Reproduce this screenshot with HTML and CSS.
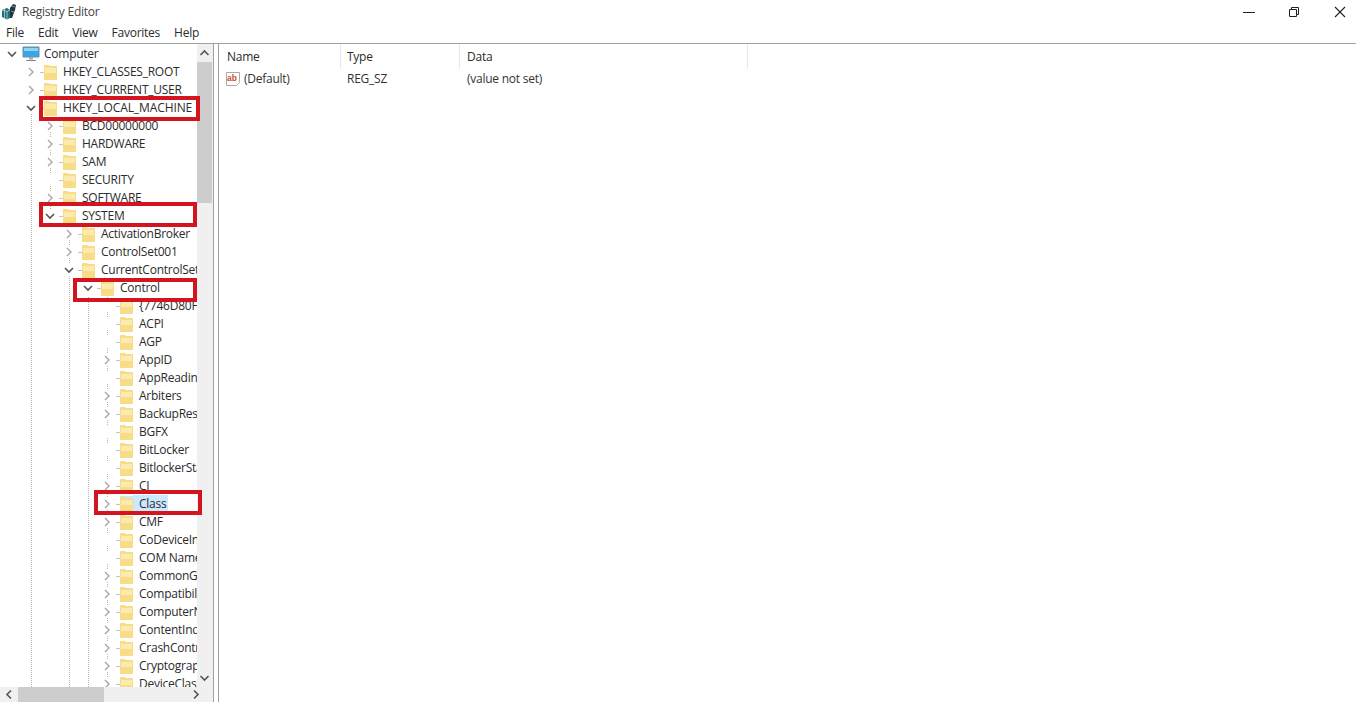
FILE: index.html
```html
<!DOCTYPE html>
<html lang="en">
<head>
<meta charset="utf-8">
<title>Registry Editor</title>
<link rel="stylesheet" href="styles.css">
</head>
<body>
<svg class="defs" width="0" height="0" aria-hidden="true">
  <defs>
    <symbol id="folder" viewBox="0 0 13 16">
      <path d="M0 1h5l1 1h7v14h-13z" fill="#f8dc88"/>
      <path d="M1 4h11v5h-11z" fill="#fcebb0"/>
    </symbol>
    <symbol id="open" viewBox="0 0 12 12">
      <path d="M2 4l4 4 4-4" fill="none" stroke="#555" stroke-width="1.600"/>
    </symbol>
    <symbol id="closed" viewBox="0 0 12 12">
      <path d="M4 2l4 4-4 4" fill="none" stroke="#a6a6a6" stroke-width="1.400"/>
    </symbol>
  </defs>
</svg>
<div class="window">
  <header class="chrome">
    <div class="titlebar">
      <svg class="app-icon" width="16" height="17" viewBox="0 0 16 17" aria-hidden="true">
        <path d="M1 7l5-2 3 2v8l-3 1.500-5-2.500z" fill="#1c6f78"/>
        <path d="M6 8.500v8M1 7l5 1.500 3-1.500M3.500 6v9.500" stroke="#d5e5e5" stroke-width=".7" fill="none"/>
        <path d="M9 5l3-4 3 1-1 5-3 8-2 0z" fill="#22343c"/>
        <path d="M11 3l3 1M10 8l3 1" stroke="#8fb6bb" stroke-width=".8"/>
      </svg>
      <span class="title">Registry Editor</span>
      <div class="controls">
        <svg class="ctl" width="12" height="12" viewBox="0 0 12 12" aria-hidden="true"><path d="M0 6.500h12" stroke="#222" stroke-width="1"/></svg>
        <svg class="ctl" width="12" height="12" viewBox="0 0 12 12" aria-hidden="true"><path d="M1.500 3.500h7v7h-7zM3.500 3.500v-2h7v7h-2" fill="none" stroke="#222" stroke-width="1"/></svg>
        <svg class="ctl" width="12" height="12" viewBox="0 0 12 12" aria-hidden="true"><path d="M1 1l10 10M11 1l-10 10" stroke="#222" stroke-width="1.100"/></svg>
      </div>
    </div>
    <nav class="menubar">
      <span class="menu">File</span>
      <span class="menu">Edit</span>
      <span class="menu">View</span>
      <span class="menu">Favorites</span>
      <span class="menu">Help</span>
    </nav>
  </header>
  <main class="panes">
    <section class="tree-pane">
      <div class="tree-body">
        <div class="tree-scroll">
          <i class="guide g1"></i><i class="guide g2"></i><i class="guide g3"></i><i class="guide g4"></i><i class="guide g5"></i>
          <ul class="tree">
            <li class="row lv0"><svg class="twist"><use href="#open"/></svg><svg class="pc" width="18" height="16" viewBox="0 0 18 16" aria-hidden="true"><path d="M1 1h16v10h-16z" fill="#3aa6e8" stroke="#6d8ea6"/><path d="M2 2h14v3h-14z" fill="#8fd3f7"/><path d="M7 11.500h4v2h-4z" fill="#9aa7b0"/><path d="M4 14h10v1h-10z" fill="#7d8a94"/></svg><span class="label pc-label">Computer</span></li>
            <li class="row lv1"><svg class="twist"><use href="#closed"/></svg><i class="dash"></i><svg class="folder"><use href="#folder"/></svg><span class="label">HKEY_CLASSES_ROOT</span></li>
            <li class="row lv1"><svg class="twist"><use href="#closed"/></svg><i class="dash"></i><svg class="folder"><use href="#folder"/></svg><span class="label">HKEY_CURRENT_USER</span></li>
            <li class="row lv1"><svg class="twist"><use href="#open"/></svg><i class="dash"></i><svg class="folder"><use href="#folder"/></svg><span class="label label-wide">HKEY_LOCAL_MACHINE</span></li>
            <li class="row lv2"><svg class="twist"><use href="#closed"/></svg><i class="dash"></i><svg class="folder"><use href="#folder"/></svg><span class="label">BCD00000000</span></li>
            <li class="row lv2"><svg class="twist"><use href="#closed"/></svg><i class="dash"></i><svg class="folder"><use href="#folder"/></svg><span class="label">HARDWARE</span></li>
            <li class="row lv2"><svg class="twist"><use href="#closed"/></svg><i class="dash"></i><svg class="folder"><use href="#folder"/></svg><span class="label">SAM</span></li>
            <li class="row lv2"><span class="twist"></span><i class="dash"></i><svg class="folder"><use href="#folder"/></svg><span class="label">SECURITY</span></li>
            <li class="row lv2"><svg class="twist"><use href="#closed"/></svg><i class="dash"></i><svg class="folder"><use href="#folder"/></svg><span class="label">SOFTWARE</span></li>
            <li class="row lv2"><svg class="twist"><use href="#open"/></svg><i class="dash"></i><svg class="folder"><use href="#folder"/></svg><span class="label">SYSTEM</span></li>
            <li class="row lv3"><svg class="twist"><use href="#closed"/></svg><i class="dash"></i><svg class="folder"><use href="#folder"/></svg><span class="label">ActivationBroker</span></li>
            <li class="row lv3"><svg class="twist"><use href="#closed"/></svg><i class="dash"></i><svg class="folder"><use href="#folder"/></svg><span class="label">ControlSet001</span></li>
            <li class="row lv3"><svg class="twist"><use href="#open"/></svg><i class="dash"></i><svg class="folder"><use href="#folder"/></svg><span class="label">CurrentControlSet</span></li>
            <li class="row lv4"><svg class="twist"><use href="#open"/></svg><i class="dash"></i><svg class="folder"><use href="#folder"/></svg><span class="label">Control</span></li>
            <li class="row lv5"><span class="twist"></span><i class="dash"></i><svg class="folder"><use href="#folder"/></svg><span class="label">{7746D80F-97E0-4E26-9543-26B41FC22F79}</span></li>
            <li class="row lv5"><span class="twist"></span><i class="dash"></i><svg class="folder"><use href="#folder"/></svg><span class="label">ACPI</span></li>
            <li class="row lv5"><span class="twist"></span><i class="dash"></i><svg class="folder"><use href="#folder"/></svg><span class="label">AGP</span></li>
            <li class="row lv5"><svg class="twist"><use href="#closed"/></svg><i class="dash"></i><svg class="folder"><use href="#folder"/></svg><span class="label">AppID</span></li>
            <li class="row lv5"><span class="twist"></span><i class="dash"></i><svg class="folder"><use href="#folder"/></svg><span class="label">AppReadiness</span></li>
            <li class="row lv5"><svg class="twist"><use href="#closed"/></svg><i class="dash"></i><svg class="folder"><use href="#folder"/></svg><span class="label">Arbiters</span></li>
            <li class="row lv5"><svg class="twist"><use href="#closed"/></svg><i class="dash"></i><svg class="folder"><use href="#folder"/></svg><span class="label">BackupRestore</span></li>
            <li class="row lv5"><span class="twist"></span><i class="dash"></i><svg class="folder"><use href="#folder"/></svg><span class="label">BGFX</span></li>
            <li class="row lv5"><span class="twist"></span><i class="dash"></i><svg class="folder"><use href="#folder"/></svg><span class="label">BitLocker</span></li>
            <li class="row lv5"><span class="twist"></span><i class="dash"></i><svg class="folder"><use href="#folder"/></svg><span class="label">BitlockerStatus</span></li>
            <li class="row lv5"><svg class="twist"><use href="#closed"/></svg><i class="dash"></i><svg class="folder"><use href="#folder"/></svg><span class="label">CI</span></li>
            <li class="row lv5 selected"><svg class="twist"><use href="#closed"/></svg><i class="dash"></i><svg class="folder"><use href="#folder"/></svg><span class="label">Class</span></li>
            <li class="row lv5"><svg class="twist"><use href="#closed"/></svg><i class="dash"></i><svg class="folder"><use href="#folder"/></svg><span class="label">CMF</span></li>
            <li class="row lv5"><span class="twist"></span><i class="dash"></i><svg class="folder"><use href="#folder"/></svg><span class="label">CoDeviceInstallers</span></li>
            <li class="row lv5"><span class="twist"></span><i class="dash"></i><svg class="folder"><use href="#folder"/></svg><span class="label">COM Name Arbiter</span></li>
            <li class="row lv5"><svg class="twist"><use href="#closed"/></svg><i class="dash"></i><svg class="folder"><use href="#folder"/></svg><span class="label">CommonGlobUserSettings</span></li>
            <li class="row lv5"><svg class="twist"><use href="#closed"/></svg><i class="dash"></i><svg class="folder"><use href="#folder"/></svg><span class="label">Compatibility</span></li>
            <li class="row lv5"><svg class="twist"><use href="#closed"/></svg><i class="dash"></i><svg class="folder"><use href="#folder"/></svg><span class="label">ComputerName</span></li>
            <li class="row lv5"><svg class="twist"><use href="#closed"/></svg><i class="dash"></i><svg class="folder"><use href="#folder"/></svg><span class="label">ContentIndex</span></li>
            <li class="row lv5"><svg class="twist"><use href="#closed"/></svg><i class="dash"></i><svg class="folder"><use href="#folder"/></svg><span class="label">CrashControl</span></li>
            <li class="row lv5"><svg class="twist"><use href="#closed"/></svg><i class="dash"></i><svg class="folder"><use href="#folder"/></svg><span class="label">Cryptography</span></li>
            <li class="row lv5"><svg class="twist"><use href="#closed"/></svg><i class="dash"></i><svg class="folder"><use href="#folder"/></svg><span class="label">DeviceClasses</span></li>
          </ul>
        </div>
        <div class="vbar">
          <svg class="sb-arrow" width="15" height="18" viewBox="0 0 15 18" aria-hidden="true"><path d="M3.500 11l4-4 4 4" fill="none" stroke="#555" stroke-width="1.600"/></svg>
          <div class="vthumb"></div>
          <svg class="sb-arrow sb-down" width="15" height="18" viewBox="0 0 15 18" aria-hidden="true"><path d="M3.500 7l4 4 4-4" fill="none" stroke="#555" stroke-width="1.600"/></svg>
        </div>
      </div>
      <div class="hbar">
        <svg class="hb-arrow" width="18" height="15" viewBox="0 0 18 15" aria-hidden="true"><path d="M11 3.500l-4 4 4 4" fill="none" stroke="#555" stroke-width="1.600"/></svg>
        <div class="hthumb"></div>
        <svg class="hb-arrow hb-right" width="18" height="15" viewBox="0 0 18 15" aria-hidden="true"><path d="M7 3.500l4 4-4 4" fill="none" stroke="#555" stroke-width="1.600"/></svg>
      </div>
      <div class="mark mark-hklm"></div>
      <div class="mark mark-system"></div>
      <div class="mark mark-control"></div>
      <div class="mark mark-class"></div>
    </section>
    <section class="list-pane">
      <div class="list-head">
        <span class="col head-name">Name</span>
        <span class="col head-type">Type</span>
        <span class="col head-data">Data</span>
      </div>
      <div class="list-row">
        <span class="cell cell-name">
          <svg class="ab" width="16" height="16" viewBox="0 0 16 16" aria-hidden="true"><path d="M1.500 1.500h13v10l-3 3h-10z" fill="#fff" stroke="#a9a9a9"/><text x="2" y="10" class="ab-text">ab</text></svg>
          (Default)
        </span>
        <span class="cell cell-type">REG_SZ</span>
        <span class="cell cell-data">(value not set)</span>
      </div>
    </section>
  </main>
</div>
</body>
</html>
```

FILE: styles.css
```css
* { box-sizing: border-box; }
html, body { margin: 0; padding: 0; height: 100%; background: #fff; overflow: hidden; }
body { font: 12px/18px "Open Sans", "Noto Sans", sans-serif; letter-spacing: -0.25px; color: #2b2b2b; }
.defs { position: absolute; }
.window { width: 1356px; height: 702px; display: flex; flex-direction: column; }

.chrome { height: 44px; border-bottom: 1px solid #a0a0a0; flex: none; }
.titlebar { height: 23px; display: flex; align-items: center; padding-left: 1px; }
.app-icon { flex: none; margin-top: -1px; }
.title { margin-left: 5px; color: #444; }
.controls { margin-left: auto; display: flex; gap: 34px; padding-right: 10px; }
.ctl:first-child { margin-right: -1px; }
.menubar { height: 20px; display: flex; padding-left: 6px; align-items: center; gap: 14px; }

.panes { flex: 1; display: flex; min-height: 0; }
.tree-pane { position: relative; width: 214px; flex: none; display: flex; flex-direction: column; border-right: 1px solid #a0a0a0; }
.tree-body { flex: 1; display: flex; min-height: 0; }
.tree-scroll { position: relative; flex: none; width: 197px; overflow: hidden; }
.tree { list-style: none; margin: 1px 0 0; padding: 0; position: relative; }
.row { height: 18px; display: flex; align-items: center; white-space: nowrap; }
.lv0 { padding-left: 6px; }
.lv1 { padding-left: 25px; }
.lv2 { padding-left: 44px; }
.lv3 { padding-left: 63px; }
.lv4 { padding-left: 82px; }
.lv5 { padding-left: 101px; }
.twist { width: 12px; height: 12px; flex: none; display: block; background: #fff; }
.dash { width: 7px; flex: none; height: 0; padding-left: 2px; }
.dash::before { content: ""; display: block; width: 4px; margin-left: 1px; border-top: 1px solid #c4c4c4; }
.folder { width: 13px; height: 16px; flex: none; }
.pc { flex: none; margin-left: 4px; }
.label { margin-left: 6px; }
.label-wide { letter-spacing: -0.1px; }
.pc-label { margin-left: 4px; }
.selected .label { background: #cce8ff; margin-left: 0; padding: 0 2px 0 6px; }
.selected .folder { background: #cce8ff; }

.guide { position: absolute; width: 0; border-left: 1px dotted #b4b4b4; }
.g1 { left: 31px; top: 70px; bottom: 0; }
.g2 { left: 50px; top: 73px; height: 100px; }
.g3 { left: 69px; top: 181px; bottom: 0; }
.g4 { left: 88px; top: 253px; bottom: 0; }
.g5 { left: 107px; top: 253px; bottom: 0; }

.vbar { width: 16px; background: #f0f0f0; display: flex; flex-direction: column; position: relative; }
.sb-arrow { flex: none; }
.sb-down { margin-top: auto; }
.vthumb { height: 141px; background: #cdcdcd; margin-right: 1px; }
.hbar { height: 15px; flex: none; background: #f0f0f0; display: flex; align-items: center; }
.hb-arrow { flex: none; }
.hthumb { width: 86px; height: 15px; background: #cdcdcd; }
.hb-right { margin-left: 83px; }

.mark { position: absolute; border: 4px solid #d2151f; }
.mark-hklm { left: 39px; top: 52px; width: 161px; height: 25px; }
.mark-system { left: 39px; top: 158px; width: 158px; height: 25px; }
.mark-control { left: 73px; top: 234px; width: 124px; height: 24px; }
.mark-class { left: 94px; top: 446px; width: 108px; height: 25px; }

.list-pane { flex: 1; margin-left: 4px; border-left: 1px solid #a0a0a0; }
.list-head { height: 25px; display: flex; align-items: center; }
.list-row { height: 18px; display: flex; align-items: center; margin-top: 1px; }
.col { flex: none; height: 25px; line-height: 26px; border-right: 1px solid #e8e8e8; }
.head-name { width: 122px; padding-left: 8px; }
.head-type { width: 119px; padding-left: 6px; }
.head-data { width: 288px; padding-left: 7px; }
.cell { flex: none; padding-left: 7px; color: #333; }
.cell-name { width: 121px; display: flex; align-items: center; padding-left: 6px; gap: 3px; }
.cell-type { width: 120px; }
.cell-data { width: 288px; }
.ab { flex: none; }
.ab-text { font: bold 8.500px "Liberation Sans", sans-serif; fill: #c8502a; letter-spacing: 0; }
```
